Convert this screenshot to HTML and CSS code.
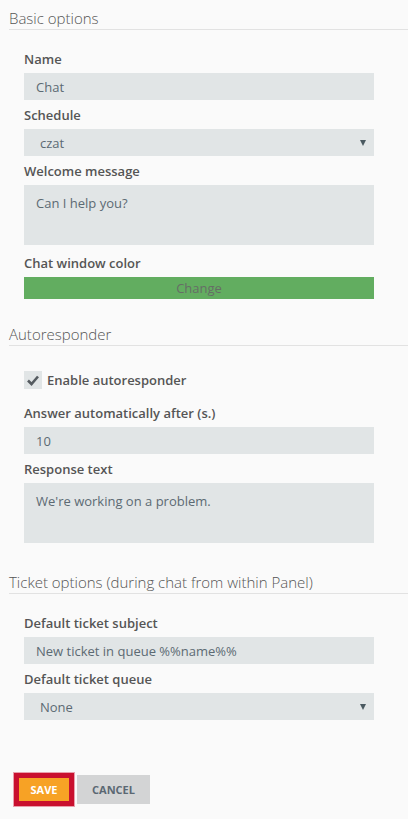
FILE: index.html
```html
<!DOCTYPE html>
<html lang="en">
<head>
    <meta charset="UTF-8">
    <meta name="viewport" content="width=device-width, initial-scale=1.0">
    <title>Chat settings</title>
    <link rel="stylesheet" href="styles.css">
</head>
<body>
    <div class="section">
        <h2 class="section-title">Basic options</h2>
        <div class="section-body">
            <label class="field-label">Name</label>
            <input class="field" value="Chat">
            <label class="field-label">Schedule</label>
            <div class="field select"><span>czat</span><span class="arrow"></span></div>
            <label class="field-label">Welcome message</label>
            <textarea class="field area">Can I help you?</textarea>
            <label class="field-label">Chat window color</label>
            <button class="color-button">Change</button>
        </div>
    </div>

    <div class="section">
        <h2 class="section-title">Autoresponder</h2>
        <div class="section-body">
            <div class="check-row">
                <span class="checkbox">
                    <svg width="14" height="14" viewBox="0 0 14 14"><path d="M2 7.5 L5.5 11 L12 3.5" fill="none" stroke="#555b60" stroke-width="2.6"/></svg>
                </span>
                <span class="check-label">Enable autoresponder</span>
            </div>
            <label class="field-label">Answer automatically after (s.)</label>
            <input class="field" value="10">
            <label class="field-label">Response text</label>
            <textarea class="field area">We're working on a problem.</textarea>
        </div>
    </div>

    <div class="section">
        <h2 class="section-title">Ticket options (during chat from within Panel)</h2>
        <div class="section-body">
            <label class="field-label">Default ticket subject</label>
            <input class="field" value="New ticket in queue %%name%%">
            <label class="field-label">Default ticket queue</label>
            <div class="field select"><span>None</span><span class="arrow"></span></div>
        </div>
    </div>

    <div class="actions">
        <button class="btn btn-save">Save</button>
        <button class="btn btn-cancel">Cancel</button>
    </div>
</body>
</html>
```

FILE: styles.css
```css
body {
    margin: 0;
    padding: 8px 0 0 9px;
    background: #fafafa;
    font-family: 'Open Sans', 'Liberation Sans', sans-serif;
    color: #555;
    height: 811px;
    overflow: hidden;
}
.section {
    margin-bottom: 25px;
}
.section-title {
    margin: 0;
    font-size: 15px;
    font-weight: 300;
    line-height: 21px;
    color: #555;
    border-bottom: 1px solid #e2e2e2;
}
.section-body {
    display: flow-root;
    padding: 14px 0 0 15px;
    width: 350px;
}
.field-label {
    display: block;
    margin: 6px 0 5px;
    font-size: 13px;
    font-weight: 600;
    line-height: 18px;
    color: #555;
}
.field {
    display: block;
    box-sizing: border-box;
    width: 350px;
    height: 27px;
    margin: 0;
    padding: 0 12px;
    border: none;
    background: #e1e5e6;
    font-family: 'Open Sans', 'Liberation Sans', sans-serif;
    font-size: 13px;
    color: #5c6a73;
    outline: none;
}
.select {
    display: flex;
    align-items: center;
    justify-content: space-between;
    padding: 0 8px 0 16px;
}
.arrow {
    width: 0;
    height: 0;
    border-left: 3.5px solid transparent;
    border-right: 3.5px solid transparent;
    border-top: 6px solid #4a5960;
}
.area {
    height: 60px;
    padding: 9px 12px;
    line-height: 18px;
    resize: none;
    margin-bottom: 4px;
}
.area + .field-label {
    margin-top: 9px;
}
.color-button {
    display: block;
    width: 350px;
    height: 22px;
    border: none;
    background: #62ad60;
    color: #666d66;
    font-family: 'Open Sans', 'Liberation Sans', sans-serif;
    font-size: 13px;
    padding: 0;
}
.check-row {
    display: flex;
    align-items: center;
    margin: 11px 0 15px;
}
.checkbox {
    display: flex;
    align-items: center;
    justify-content: center;
    width: 18px;
    height: 18px;
    background: #e1e5e6;
    margin-right: 5px;
}
.check-label {
    font-size: 13px;
    font-weight: 600;
    line-height: 18px;
}
.actions {
    display: flex;
    align-items: center;
    gap: 3px;
    margin: 53px 0 0 5px;
}
.btn {
    border: none;
    font-family: 'Open Sans', 'Liberation Sans', sans-serif;
    font-size: 11px;
    font-weight: 700;
    text-transform: uppercase;
    cursor: pointer;
}
.btn-save {
    box-sizing: border-box;
    width: 60px;
    height: 33px;
    border: 5px solid #c9102f;
    box-shadow: 0 0 0 1px #e9a0ad;
    background: #f7a225;
    color: #fff;
    padding: 0;
}
.btn-cancel {
    width: 73px;
    height: 29px;
    background: #d3d4d5;
    color: #5b6873;
    padding: 0;
}
```
